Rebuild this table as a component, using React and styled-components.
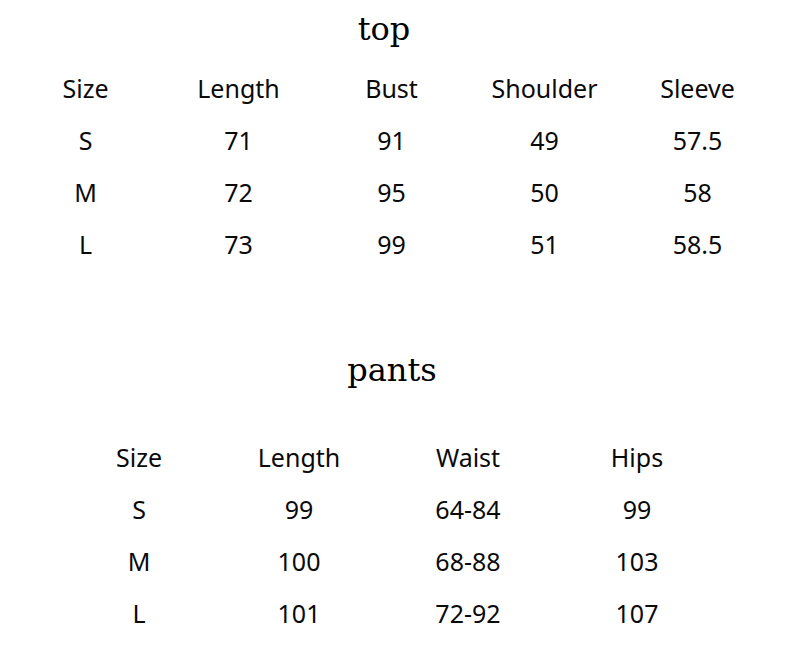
import React from "react";
import styled, { createGlobalStyle } from "styled-components";

const Global = createGlobalStyle`
  html, body { margin: 0; padding: 0; background: #fff; }
  body { font-family: "Noto Sans", "Open Sans", sans-serif; color: #000; }
`;

const Page = styled.div`
  width: 799px;
  height: 645px;
  background: #fff;
  display: flex;
  flex-direction: column;
  overflow: hidden;
`;

const Title = styled.h2`
  margin: 0;
  margin-top: ${(p) => p.$top}px;
  margin-left: ${(p) => p.$shift}px;
  height: 40px;
  line-height: 40px;
  text-align: center;
  font-family: "DejaVu Serif", "Liberation Serif", serif;
  font-weight: 400;
  font-size: 32px;
  color: #000;
`;

const Table = styled.div`
  display: grid;
  grid-template-columns: ${(p) => p.$cols};
  margin-left: ${(p) => p.$left}px;
  margin-top: ${(p) => p.$gap}px;
`;

const Cell = styled.div`
  height: 52px;
  line-height: 52px;
  text-align: center;
  font-size: 25px;
  color: #0a0a0a;
  white-space: nowrap;
`;

const topData = [
  ["Size", "Length", "Bust", "Shoulder", "Sleeve"],
  ["S", "71", "91", "49", "57.5"],
  ["M", "72", "95", "50", "58"],
  ["L", "73", "99", "51", "58.5"],
];

const pantsData = [
  ["Size", "Length", "Waist", "Hips"],
  ["S", "99", "64-84", "99"],
  ["M", "100", "68-88", "103"],
  ["L", "101", "72-92", "107"],
];

function SizeTable({ rows, cols, left, gap }) {
  return (
    <Table $cols={cols} $left={left} $gap={gap}>
      {rows.flat().map((v, i) => (
        <Cell key={i}>{v}</Cell>
      ))}
    </Table>
  );
}

export default function App() {
  return (
    <>
      <Global />
      <Page>
        <Title $top={9} $shift={-31}>top</Title>
        <SizeTable rows={topData} cols="repeat(5, 153px)" left={9} gap={13} />
        <Title $top={80} $shift={-15}>pants</Title>
        <SizeTable rows={pantsData} cols="160px 160px 178px 160px" left={59} gap={41} />
      </Page>
    </>
  );
}
